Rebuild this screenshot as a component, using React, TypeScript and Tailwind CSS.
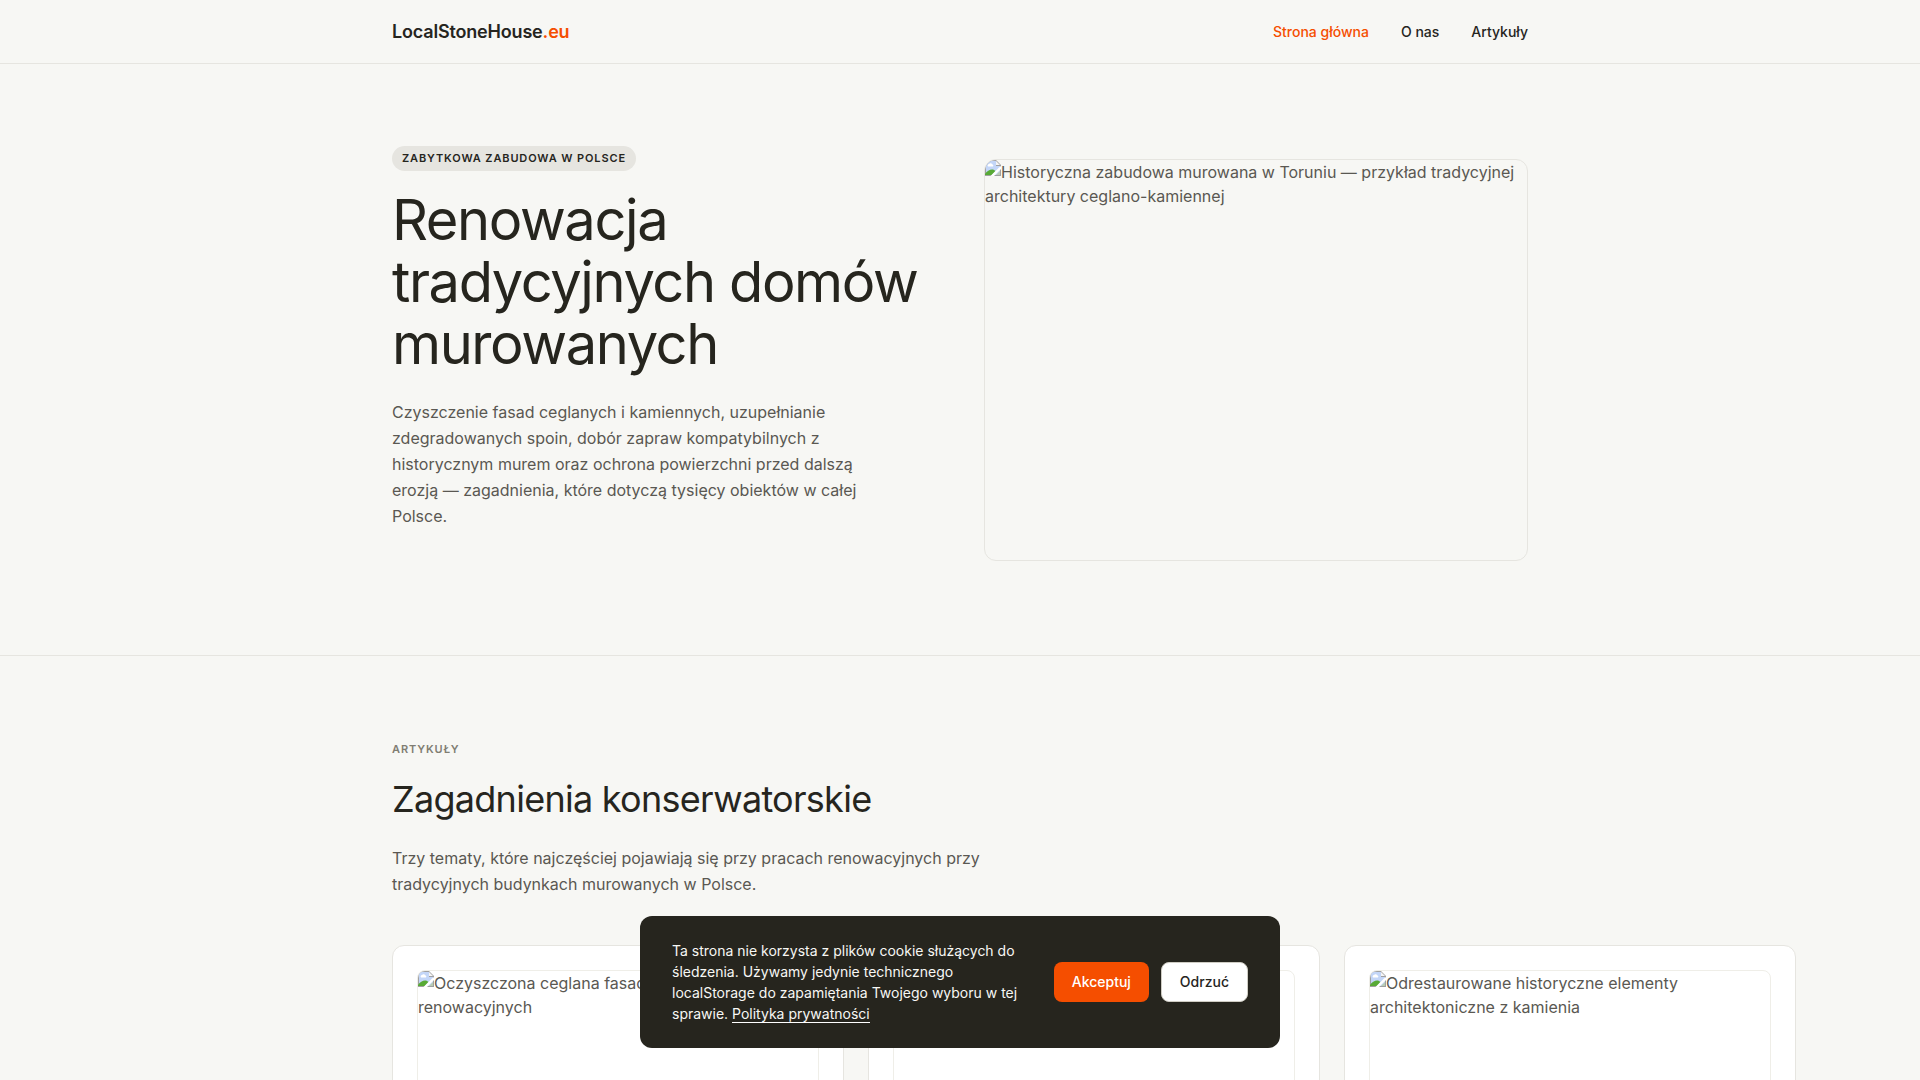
import { useState } from "react";
import clsx from "clsx";

const navLinks = [
  { label: "Strona główna", href: "#top", active: true },
  { label: "O nas", href: "#o-nas", active: false },
  { label: "Artykuły", href: "#artykuly", active: false },
];

const articles = [
  { id: "fasada", alt: "Oczyszczona ceglana fasada budynku po pracach renowacyjnych" },
  { id: "spoiny", alt: "Spoiny w murze" },
  { id: "kamien", alt: "Odrestaurowane historyczne elementy architektoniczne z kamienia" },
];

function MissingImageIcon() {
  return (
    <svg viewBox="0 0 16 16" className="float-left size-4" aria-hidden="true">
      <path d="M0 0h11l5 5v11H0z" fill="#a0a0a0" />
      <path d="M1 1h10v5h4v9H1z" fill="#c3d6f8" />
      <path d="M11 1l4 4h-4z" fill="#f5f5f5" />
      <path d="M3 6.500a1.500 1.500 0 0 1 1-2.500 2 2 0 0 1 3.500.5A1.200 1.200 0 0 1 8 6.500z" fill="#fff" />
      <path d="M0 15v-1c2-3 4.500-4.500 7-4.500 1.500 0 2.700.6 3.500 1.500L7 15z" fill="#58aa36" />
      <path d="M16 6v3l-7 7H5.500L14 7.500z" fill="#fff" />
      <path d="M15 11v4h-4z" fill="#b9cdb4" />
    </svg>
  );
}

function ImagePlaceholder({ alt, className }: { alt: string; className?: string }) {
  return (
    <div
      role="img"
      aria-label={alt}
      className={clsx("overflow-hidden border text-base leading-6 text-[#5a5852]", className)}
    >
      <MissingImageIcon />
      {alt}
    </div>
  );
}

function Header() {
  return (
    <header className="border-b border-[#e6e5e0]">
      <div className="mx-auto flex h-[63px] max-w-[1200px] items-center justify-between px-8 pt-px">
        <a href="#top" className="text-lg font-semibold tracking-[-0.01em]">
          LocalStoneHouse<span className="text-[#f54e00]">.eu</span>
        </a>
        <nav className="flex gap-8">
          {navLinks.map((link) => (
            <a
              key={link.label}
              href={link.href}
              className={clsx("text-sm font-medium", link.active && "text-[#f54e00]")}
            >
              {link.label}
            </a>
          ))}
        </nav>
      </div>
    </header>
  );
}

function Hero() {
  return (
    <section className="border-b border-[#e6e5e0] py-20">
      <div className="mx-auto grid max-w-[1200px] grid-cols-2 items-center gap-12 px-8">
        <div className="pb-[46px]">
          <span className="inline-block rounded-full bg-[#e6e5e0] px-[10px] py-1 text-[11px] leading-[17px] font-semibold tracking-[0.08em] uppercase">
            Zabytkowa zabudowa w Polsce
          </span>
          <h1 className="mt-[18px] text-[56px] leading-[62px] font-normal tracking-tight">
            Renowacja tradycyjnych domów murowanych
          </h1>
          <p className="mt-6 max-w-[480px] text-base leading-[26px] text-[#5a5852]">
            Czyszczenie fasad ceglanych i kamiennych, uzupełnianie zdegradowanych spoin, dobór zapraw
            kompatybilnych z historycznym murem oraz ochrona powierzchni przed dalszą erozją — zagadnienia,
            które dotyczą tysięcy obiektów w całej Polsce.
          </p>
        </div>
        <ImagePlaceholder
          alt="Historyczna zabudowa murowana w Toruniu — przykład tradycyjnej architektury ceglano-kamiennej"
          className="h-[402px] rounded-xl border-[#e6e5e0]"
        />
      </div>
    </section>
  );
}

function Articles() {
  return (
    <section id="artykuly" className="py-20">
      <div className="mx-auto max-w-[1200px] px-8">
        <p className="text-[11px] leading-[26px] font-semibold tracking-[0.08em] text-[#807d72] uppercase">
          Artykuły
        </p>
        <h2 className="mt-4 text-4xl leading-[43px] font-normal tracking-[-0.02em]">Zagadnienia konserwatorskie</h2>
        <p className="mt-6 max-w-[600px] text-base leading-[26px] text-[#5a5852]">
          Trzy tematy, które najczęściej pojawiają się przy pracach renowacyjnych przy tradycyjnych budynkach
          murowanych w Polsce.
        </p>
        <div className="mt-12 flex gap-6">
          {articles.map((article) => (
            <article
              key={article.id}
              className="w-[452px] shrink-0 rounded-xl border border-[#e6e5e0] bg-white p-6"
            >
              <ImagePlaceholder alt={article.alt} className="aspect-[4/3] rounded-lg border-[#efeee8]" />
            </article>
          ))}
        </div>
      </div>
    </section>
  );
}

function CookieBanner({ onClose }: { onClose: () => void }) {
  return (
    <div
      role="dialog"
      aria-label="Informacja o plikach cookie"
      className="fixed inset-x-0 bottom-8 mx-auto flex max-w-[640px] items-center gap-8 rounded-xl bg-[#26251e] px-8 py-6"
    >
      <p className="flex-1 text-sm leading-[21px] text-[#f7f7f4]">
        Ta strona nie korzysta z plików cookie służących do śledzenia. Używamy jedynie technicznego localStorage
        do zapamiętania Twojego wyboru w tej sprawie.{" "}
        <a href="#prywatnosc" className="border-b border-white">
          Polityka prywatności
        </a>
      </p>
      <div className="flex gap-3">
        <button
          type="button"
          onClick={onClose}
          className="h-10 rounded-lg bg-[#f54e00] px-[18px] text-sm font-medium text-white"
        >
          Akceptuj
        </button>
        <button
          type="button"
          onClick={onClose}
          className="h-10 rounded-lg border border-[#cfcdc4] bg-white px-[18px] text-sm font-medium text-[#26251e]"
        >
          Odrzuć
        </button>
      </div>
    </div>
  );
}

export default function App() {
  const [showBanner, setShowBanner] = useState(true);

  return (
    <div
      id="top"
      className="h-screen overflow-x-hidden overflow-y-auto bg-[#f7f7f4] font-['Inter',sans-serif] text-[#26251e] [scrollbar-width:none]"
    >
      <Header />
      <main>
        <Hero />
        <Articles />
      </main>
      {showBanner && <CookieBanner onClose={() => setShowBanner(false)} />}
    </div>
  );
}
